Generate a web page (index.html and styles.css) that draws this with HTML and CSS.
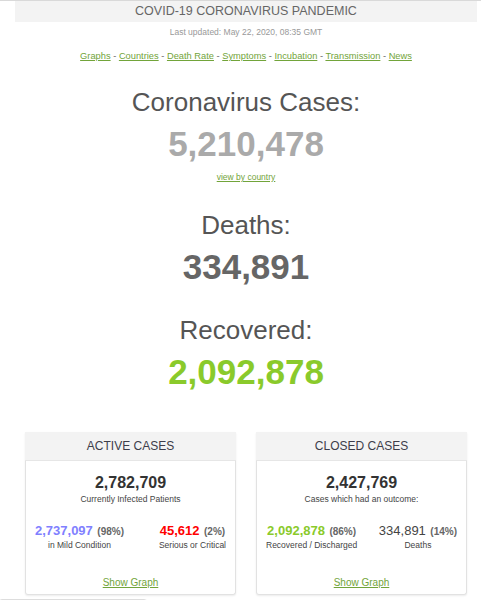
FILE: index.html
```html
<!DOCTYPE html>
<html lang="en">
<head>
  <meta charset="UTF-8">
  <title>COVID-19 Coronavirus Pandemic</title>
  <meta name="viewport" content="width=device-width,initial-scale=1">
  <link rel="stylesheet" href="styles.css">
</head>
<body>
  <div class="topline"></div>

  <div class="wrap">
    <div class="banner">COVID-19 CORONAVIRUS PANDEMIC</div>
    <div class="updated">Last updated: May 22, 2020, 08:35 GMT</div>

    <!-- section links -->
    <div class="nav">
      <a href="#">Graphs</a> - <a href="#">Countries</a> - <a href="#">Death Rate</a> -
      <a href="#">Symptoms</a> - <a href="#">Incubation</a> - <a href="#">Transmission</a> -
      <a href="#">News</a>
    </div>

    <!-- main counters -->
    <div class="counter first">
      <h1>Coronavirus Cases:</h1>
      <div class="num grey">5,210,478</div>
      <a class="by-country" href="#">view by country</a>
    </div>

    <div class="counter">
      <h1>Deaths:</h1>
      <div class="num dark">334,891</div>
    </div>

    <div class="counter last">
      <h1>Recovered:</h1>
      <div class="num green">2,092,878</div>
    </div>

    <!-- active / closed panels -->
    <div class="panels">
      <div class="panel">
        <div class="panel-head">ACTIVE CASES</div>
        <div class="panel-body">
          <div class="total">2,782,709</div>
          <div class="caption">Currently Infected Patients</div>
          <div class="split">
            <div class="part">
              <span class="part-num mild">2,737,097</span> <span class="pct">(98%)</span>
              <div class="caption">in Mild Condition</div>
            </div>
            <div class="part">
              <span class="part-num critical">45,612</span> <span class="pct">(2%)</span>
              <div class="caption">Serious or Critical</div>
            </div>
          </div>
          <a class="graph-link" href="#">Show Graph</a>
        </div>
      </div>

      <div class="panel">
        <div class="panel-head">CLOSED CASES</div>
        <div class="panel-body">
          <div class="total">2,427,769</div>
          <div class="caption">Cases which had an outcome:</div>
          <div class="split">
            <div class="part">
              <span class="part-num green">2,092,878</span> <span class="pct">(86%)</span>
              <div class="caption">Recovered / Discharged</div>
            </div>
            <div class="part">
              <span class="part-num deaths">334,891</span> <span class="pct">(14%)</span>
              <div class="caption">Deaths</div>
            </div>
          </div>
          <a class="graph-link" href="#">Show Graph</a>
        </div>
      </div>
    </div>
  </div>

  <div class="footbox"></div>
</body>
</html>
```

FILE: styles.css
```css
*{box-sizing:border-box}
body{margin:0;font-family:"Liberation Sans",Arial,Helvetica,sans-serif;background:#fff;color:#333}
a{color:#72a43a}
.topline{height:1px;background:#d9d9d9}
.wrap{width:462px;margin-left:15px}
/* header */
.banner{background:#f3f3f3;height:21px;line-height:21px;text-align:center;font-size:12.5px;color:#666}
.updated{margin-top:4px;text-align:center;font-size:8.5px;line-height:12px;color:#999}
.nav{margin-top:12px;text-align:center;font-size:9.3px;line-height:12px;color:#666}
/* big counters */
.counter{text-align:center}
.counter.first{margin-top:25px}
.counter + .counter{margin-top:27px}
.counter.last{margin-top:28px}
.counter h1{margin:0;font-size:26px;line-height:30px;font-weight:normal;color:#555}
.num{margin-top:7px;font-size:35px;line-height:40px;font-weight:bold}
.num.grey{color:#aaa}
.num.dark{color:#666}
.num.green{color:#8aca2b}
.by-country{display:block;margin-top:7px;font-size:8.5px;line-height:12px}
/* panels */
.panels{display:grid;grid-template-columns:1fr 1fr;gap:20px;padding:0 10px;margin-top:40px}
.panel{box-shadow:0 1px 2px rgba(0,0,0,.08);border-radius:0 0 3px 3px}
.panel-head{background:#f3f3f3;height:29px;line-height:29px;text-align:center;font-size:12px;color:#3d3d4a;border-bottom:1px solid #e6e6e6}
.panel-body{background:#fff;border:1px solid #e2e2e2;border-top:none;border-radius:0 0 3px 3px;padding:12px 9px 4px;text-align:center}
.total{font-size:16px;line-height:20px;font-weight:bold;color:#333}
.caption{font-size:8.5px;line-height:12px;color:#444}
.split{display:flex;justify-content:space-between;margin-top:16px}
.part-num{font-size:13px;line-height:16px;font-weight:bold}
.part-num.mild{color:#8080ff}
.part-num.critical{color:#f00}
.part-num.green{color:#8aca2b}
.part-num.deaths{color:#444;font-weight:normal}
.pct{font-size:10px;font-weight:bold;color:#666}
.graph-link{display:inline-block;margin-top:25px;font-size:10px;line-height:14px}
/* box peeking in under the panels */
.footbox{width:150px;height:20px;margin:4px 0 0 -2px;border:1px solid #ddd;border-radius:4px}
```
